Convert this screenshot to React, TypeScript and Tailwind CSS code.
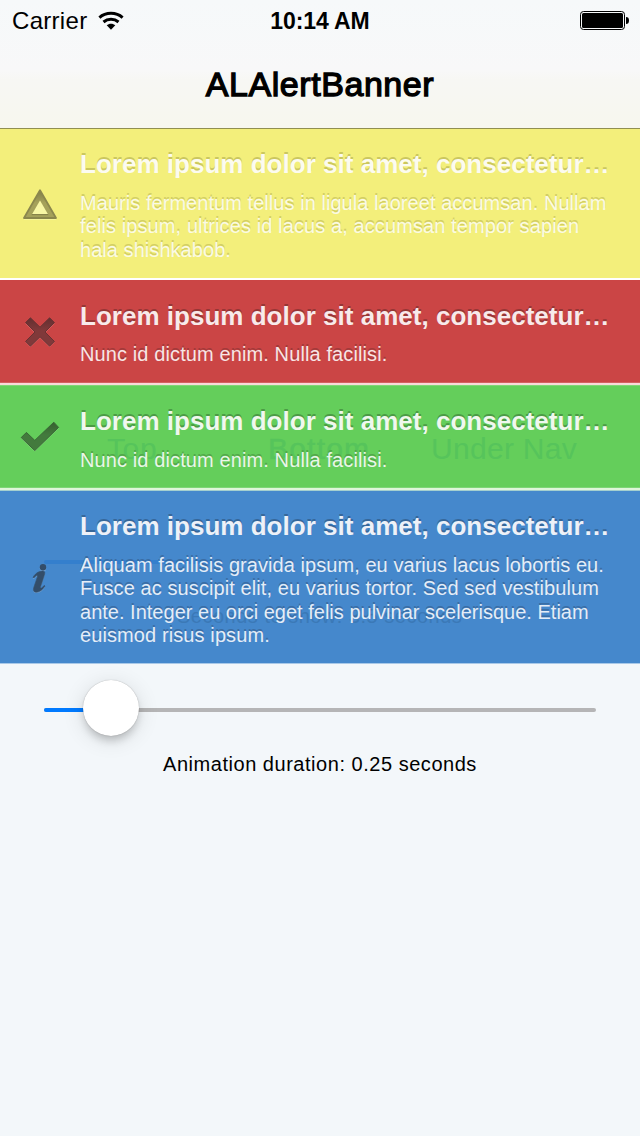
import type { ReactNode } from "react";

type Line = { text: string; track: string };

type BannerProps = {
  tone: string;
  icon: ReactNode;
  titleColor: string;
  textColor: string;
  lines: Line[];
  ghost?: ReactNode;
};

function Banner({ tone, icon, titleColor, textColor, lines, ghost }: BannerProps) {
  return (
    <section className={`relative flex w-full overflow-hidden ${tone}`}>
      {ghost}
      <div className="relative flex w-20 shrink-0 items-center justify-center">{icon}</div>
      <div className="relative whitespace-nowrap">
        <h2 className={`text-[26px] leading-[30px] font-bold tracking-[0.02px] ${titleColor}`}>
          Lorem ipsum dolor sit amet, consectetur…
        </h2>
        <p className={`text-[20px] leading-[23.4px] ${textColor}`}>
          {lines.map((l) => (
            <span key={l.text} className={`block ${l.track}`}>
              {l.text}
            </span>
          ))}
        </p>
      </div>
    </section>
  );
}

function IconDefs({ id, top, mid }: { id: string; top: string; mid: string }) {
  return (
    <defs>
      <linearGradient id={id} x1="0" y1="0" x2="0" y2="1">
        <stop offset="0" stopColor={top} />
        <stop offset="0.45" stopColor={mid} />
        <stop offset="1" stopColor={mid} />
      </linearGradient>
    </defs>
  );
}

function WarningIcon() {
  return (
    <svg width="40" height="40" viewBox="0 0 40 40">
      <IconDefs id="warn" top="#7f7c48" mid="#a5a15a" />
      <path d="M20 6.2 L36 34 H4 Z" fill="url(#warn)" stroke="#8b874d" strokeWidth="1.8" strokeLinejoin="round" />
      <path d="M20 16.6 L12 30.2 H28 Z" fill="#f8f6a4" />
      <path d="M11.8 30.6 H28.2" stroke="#827e46" strokeWidth="1" />
      <path d="M4 35.4 H36" stroke="#fbfac0" strokeWidth="0.8" opacity="0.6" />
    </svg>
  );
}

function CrossIcon() {
  const d =
    "M10.4 5.8 L20 15.2 L29.6 5.8 L34.4 10.6 L25 20 L34.4 29.4 L29.6 34.2 L20 24.8 L10.4 34.2 L5.6 29.4 L15 20 L5.6 10.6 Z";
  return (
    <svg width="40" height="40" viewBox="0 0 40 40">
      <IconDefs id="cross" top="#622f30" mid="#80393a" />
      <path d={d} transform="translate(0 0.9)" fill="#d87c7c" />
      <path d={d} fill="url(#cross)" stroke="#683132" strokeWidth="1" />
    </svg>
  );
}

function CheckIcon() {
  const d = "M1.2 20.6 L6.4 15.4 L14.8 23.4 L33.8 5.2 L38.6 10.4 L14.8 33.6 Z";
  return (
    <svg width="40" height="40" viewBox="0 0 40 40">
      <IconDefs id="check" top="#36602f" mid="#437a3d" />
      <path d={d} transform="translate(0 0.9)" fill="#8fd987" />
      <path d={d} fill="url(#check)" stroke="#376634" strokeWidth="1" />
    </svg>
  );
}

function InfoIcon() {
  const d =
    "M1 13.2 C4 8.6 8 6.6 11.6 7.2 C13.3 7.6 12.8 9.6 12.2 11.6 L8.6 22.6 C8.1 24.4 9 24.8 10.2 23.6 L12.2 21.4 L13 22 C10.4 26.4 6.8 28.4 3.8 28.2 C1.4 28 1 26 1.8 23.4 L5.2 13.4 C5.8 11.6 5 11 3.8 12 L1.8 14 Z";
  return (
    <svg width="16" height="32" viewBox="0 0 16 32">
      <g fill="#74a5d6" transform="translate(0 0.9)">
        <path d={d} />
        <circle cx="11" cy="3.3" r="3.2" />
      </g>
      <g fill="#334d69">
        <path d={d} stroke="#334d69" strokeWidth="0.6" />
        <circle cx="11" cy="3.3" r="3.2" />
      </g>
    </svg>
  );
}

function WifiIcon() {
  return (
    <svg width="26" height="20" viewBox="0 0 26 20">
      <g fill="none" stroke="#000" strokeWidth="3">
        <path d="M1.4 6.6 C7.8 0.9 18.2 0.9 24.6 6.6" />
        <path d="M5.5 11 C9.8 7.3 16.2 7.3 20.5 11" />
      </g>
      <path d="M8.7 14.2 C11 12.1 15 12.1 17.3 14.2 L13 18.7 Z" fill="#000" />
    </svg>
  );
}

function BatteryIcon() {
  return (
    <svg width="50" height="20" viewBox="0 0 50 20">
      <rect x="0.5" y="0.5" width="44" height="18" rx="3" fill="none" stroke="#000" />
      <rect x="2" y="2" width="41" height="15" rx="1.5" fill="#000" />
      <path d="M46 6 C48 6 49 7 49 9.5 C49 12 48 13 46 13 Z" fill="#000" />
    </svg>
  );
}

export default function App() {
  return (
    <main
      className="flex h-[1136px] w-[640px] flex-col overflow-hidden bg-[#f3f7fa] text-black"
      style={{ fontFamily: '"Liberation Sans", Arial, sans-serif' }}
    >
      <header className="flex h-[129px] shrink-0 flex-col border-b border-[#918f50] bg-[linear-gradient(to_bottom,#f6f9fa_0px,#f8f8f9_70px,#f7f7f4_80px,#f7f7ee_128px)]">
        <div className="grid h-[41px] grid-cols-3 items-center pr-[10px] pl-3">
          <div className="flex items-center gap-[11px]">
            <span className="pt-px text-[24px] leading-10 tracking-[0.3px]">Carrier</span>
            <WifiIcon />
          </div>
          <span className="pt-px pr-0.5 text-center text-[23px] font-bold tracking-[-0.1px]">10:14 AM</span>
          <div className="flex justify-end">
            <BatteryIcon />
          </div>
        </div>
        <h1 className="mt-[23px] text-center text-[34px] leading-10 tracking-[0.55px] [-webkit-text-stroke:1.3px_#000]">ALAlertBanner</h1>
      </header>

      <Banner
        tone="h-[151px] shrink-0 border-b-2 border-white bg-[#f3ef7b] pt-5"
        icon={<div className="-mt-5"><WarningIcon /></div>}
        titleColor="text-[#fcfbf0] [text-shadow:0_-2px_0.5px_#cbc75f]"
        textColor="mt-[13px] text-[#fafae6] [text-shadow:0_-2px_0.5px_#d2ce65]"
        lines={[
          { text: "Mauris fermentum tellus in ligula laoreet accumsan. Nullam", track: "tracking-[0.05px]" },
          { text: "felis ipsum, ultrices id lacus a, accumsan tempor sapien", track: "tracking-[0.1px]" },
          { text: "hala shishkabob.", track: "tracking-[0.05px]" },
        ]}
      />
      <Banner
        tone="h-[105px] shrink-0 border-b-2 border-[#f9dada] bg-[#cb4545] pt-[21px] shadow-[inset_0_-1px_0_#d66162]"
        icon={<div className="-mt-[21px]"><CrossIcon /></div>}
        titleColor="text-[#f8eaea] [text-shadow:0_-2px_0.5px_#963635]"
        textColor="mt-3 text-[#f8e5e5] [text-shadow:0_-2px_0.5px_#a23a3a]"
        lines={[{ text: "Nunc id dictum enim. Nulla facilisi.", track: "tracking-[0.11px]" }]}
      />
      <Banner
        tone="h-[105px] shrink-0 border-b-2 border-[#def6da] bg-[#64ce5b] pt-[21px] shadow-[inset_0_1px_0_#82d576,inset_0_-1px_0_#7dd676]"
        icon={<div className="-mt-5"><CheckIcon /></div>}
        titleColor="text-[#f0f8ee] [text-shadow:0_-2px_0.5px_#4b9b45]"
        textColor="mt-[13px] text-[#eaf6e9] [text-shadow:0_-2px_0.5px_#52a64a]"
        lines={[{ text: "Nunc id dictum enim. Nulla facilisi.", track: "tracking-[0.11px]" }]}
        ghost={
          <div className="absolute inset-x-0 top-[46px] h-9 text-[30px] leading-9 whitespace-nowrap text-[#56c45b]">
            <span className="absolute left-[107px] tracking-[0.6px]">Top</span>
            <span className="absolute left-[268px] tracking-[1.2px] [-webkit-text-stroke:0.4px_#56c45b]">Bottom</span>
            <span className="absolute left-[431px] tracking-[0.3px]">Under Nav</span>
          </div>
        }
      />
      <Banner
        tone="h-[174px] shrink-0 border-t border-b border-t-[#a5cfcf] border-b-[#a9c9e8] bg-[#4588cc] pt-5"
        icon={<div className="-mt-[15px]"><InfoIcon /></div>}
        titleColor="text-[#edf1f8] [text-shadow:0_-2px_0.5px_#36679a]"
        textColor="mt-[13px] text-[#e5edf7] [text-shadow:0_-2px_0.5px_#3a6da4]"
        lines={[
          { text: "Aliquam facilisis gravida ipsum, eu varius lacus lobortis eu.", track: "tracking-[0.06px]" },
          { text: "Fusce ac suscipit elit, eu varius tortor. Sed sed vestibulum", track: "tracking-[0.09px]" },
          { text: "ante. Integer eu orci eget felis pulvinar scelerisque. Etiam", track: "tracking-[0.01px]" },
          { text: "euismod risus ipsum.", track: "tracking-[0.1px]" },
        ]}
        ghost={
          <>
            <div className="absolute top-[69px] left-11 h-1 w-[170px] rounded-full bg-[#347fcd]" />
            <span className="absolute top-[113px] left-[177px] text-[20px] leading-6 tracking-[0.5px] whitespace-nowrap text-[#3b79b7]">
              Seconds to show: 3.5 seconds
            </span>
          </>
        }
      />

      <div className="mx-11 mt-4 flex h-14 items-center">
        <div className="relative mt-1 h-1 w-full rounded-full bg-[#b5b5b6]">
          <div className="h-1 w-16 rounded-full bg-[#007aff]" />
          <div className="absolute -top-7 left-[39px] size-14 rounded-full bg-white shadow-[0_0_1px_rgba(0,0,0,0.35),0_6px_8px_-2px_rgba(0,0,0,0.2),0_4px_22px_rgba(0,0,0,0.12)]" />
        </div>
      </div>
      <p className="mt-4 text-center text-[20px] leading-6 tracking-[0.53px]">Animation duration: 0.25 seconds</p>
    </main>
  );
}
